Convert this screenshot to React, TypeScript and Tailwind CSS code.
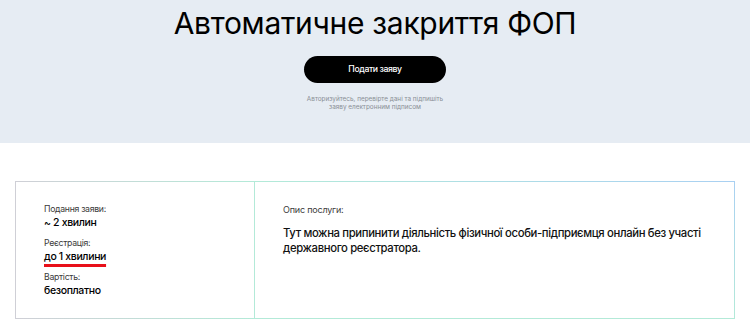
import React from 'react';

const facts = [
  { label: 'Подання заяви:', value: '~ 2 хвилин' },
  { label: 'Реєстрація:', value: 'до 1 хвилини', marked: true },
  { label: 'Вартість:', value: 'безоплатно' },
];

const App = () => {
  return (
    <div className="w-[750px] h-[330px] bg-white overflow-hidden font-['Inter',sans-serif] text-black">
      <section className="h-[143px] bg-[#e6ecf3] flex flex-col items-center">
        <h1 className="text-[30px] leading-none tracking-[-0.3px] mt-[8px]">Автоматичне закриття ФОП</h1>
        <button className="mt-[18px] w-[142px] h-[27px] rounded-full bg-black text-white text-[8.7px] tracking-[-0.4px] font-medium">
          Подати заяву
        </button>
        <p className="mt-[12px] text-[6.4px] leading-[8px] text-[#8a8f96] text-center">
          Авторизуйтесь, перевірте дані та підпишіть
          <br />
          заяву електронним підписом
        </p>
      </section>

      <div className="px-[15px] pt-[38px]">
        <div className="flex h-[138px]">
          <div className="w-[240px] p-px bg-gradient-to-r from-[#cfcfd6] to-[#b3ead8]">
            <div className="h-full bg-white pl-[28px] pt-[21px] flex flex-col gap-[7px]">
              {facts.map((f) => (
                <div key={f.label} className="flex flex-col">
                  <span className="text-[8.7px] leading-[13px] tracking-[-0.3px] text-[#3a3a3a]">{f.label}</span>
                  <span
                    className={
                      f.marked
                        ? 'text-[10.5px] leading-[14px] tracking-[-0.35px] font-medium underline decoration-[#e8101a] decoration-[2.5px] underline-offset-[4px]'
                        : 'text-[10.5px] leading-[14px] tracking-[-0.35px] font-medium'
                    }
                  >
                    {f.value}
                  </span>
                </div>
              ))}
            </div>
          </div>
          <div className="flex-1 p-px pl-0 bg-gradient-to-tr from-[#b3ead8] via-[#b3ead8] to-[#a9d0f2]">
            <div className="h-full bg-white pl-[28px] pt-[22px]">
              <p className="text-[9px] leading-[12px] tracking-[-0.2px] text-[#3a3a3a]">Опис послуги:</p>
              <p className="mt-[10px] text-[11.3px] leading-[15px] tracking-[-0.35px] font-medium text-[#111] w-[430px]">
                Тут можна припинити діяльність фізичної особи-підприємця онлайн без участі державного реєстратора.
              </p>
            </div>
          </div>
        </div>
      </div>
    </div>
  );
};

export default App;
